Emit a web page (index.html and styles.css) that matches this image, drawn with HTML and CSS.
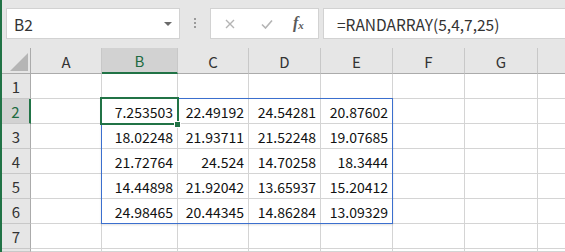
FILE: index.html
```html
<!DOCTYPE html>
<html>

<head>
    <meta charset="utf-8" />
    <title>Book1 - Excel</title>
    <link rel="stylesheet" href="styles.css">
</head>

<body>
    <div class="window">
        <div class="formula-bar">
            <div class="name-box">
                <span>B2</span>
                <svg class="drop" width="8" height="4" viewBox="0 0 8 4"><path d="M0 0h8L4 4z" fill="#6a6a6a"/></svg>
            </div>
            <div class="grip"><i></i><i></i><i></i></div>
            <div class="fx-box">
                <svg class="icon" width="10" height="10" viewBox="0 0 10 10"><path d="M1 1L9 9M9 1L1 9" stroke="#b4b4b4" stroke-width="1.4" fill="none"/></svg>
                <svg class="icon" width="12" height="10" viewBox="0 0 12 10"><path d="M1 5.5L4.5 9L11 1.5" stroke="#b4b4b4" stroke-width="1.6" fill="none"/></svg>
                <span class="fx">f<sub>x</sub></span>
            </div>
            <div class="formula-input">=RANDARRAY(5,4,7,25)</div>
        </div>

        <div class="sheet">
            <div class="hd corner"><svg width="18" height="18" viewBox="0 0 18 18"><path d="M18 0V18H0z" fill="#b5b5b5"/></svg></div>
            <div class="hd">A</div>
            <div class="hd sel-col">B</div>
            <div class="hd">C</div>
            <div class="hd">D</div>
            <div class="hd">E</div>
            <div class="hd">F</div>
            <div class="hd">G</div>
            <div class="hd last"></div>

            <div class="rh">1</div>
            <div class="c"></div><div class="c"></div><div class="c"></div><div class="c"></div><div class="c"></div><div class="c"></div><div class="c"></div><div class="c last"></div>

            <div class="rh sel-row">2</div>
            <div class="c"></div><div class="c">7.253503</div><div class="c">22.49192</div><div class="c">24.54281</div><div class="c">20.87602</div><div class="c"></div><div class="c"></div><div class="c last"></div>

            <div class="rh">3</div>
            <div class="c"></div><div class="c">18.02248</div><div class="c">21.93711</div><div class="c">21.52248</div><div class="c">19.07685</div><div class="c"></div><div class="c"></div><div class="c last"></div>

            <div class="rh">4</div>
            <div class="c"></div><div class="c">21.72764</div><div class="c">24.524</div><div class="c">14.70258</div><div class="c">18.3444</div><div class="c"></div><div class="c"></div><div class="c last"></div>

            <div class="rh">5</div>
            <div class="c"></div><div class="c">14.44898</div><div class="c">21.92042</div><div class="c">13.65937</div><div class="c">15.20412</div><div class="c"></div><div class="c"></div><div class="c last"></div>

            <div class="rh">6</div>
            <div class="c"></div><div class="c">24.98465</div><div class="c">20.44345</div><div class="c">14.86284</div><div class="c">13.09329</div><div class="c"></div><div class="c"></div><div class="c last"></div>

            <div class="rh">7</div>
            <div class="c"></div><div class="c"></div><div class="c"></div><div class="c"></div><div class="c"></div><div class="c"></div><div class="c"></div><div class="c last"></div>

            <!-- row 8 is only a sliver at the bottom edge -->
            <div class="rh"></div>
            <div class="c"></div><div class="c"></div><div class="c"></div><div class="c"></div><div class="c"></div><div class="c"></div><div class="c"></div><div class="c last"></div>

            <!-- spill range and active cell drawn over the grid -->
            <div class="spill"></div>
            <div class="active"><span class="handle"></span></div>
        </div>
    </div>
</body>

</html>
```

FILE: styles.css
```css
html,
body {
    margin: 0;
    padding: 0;
    overflow: hidden;
}

body {
    width: 565px;
    height: 252px;
    background: #e6e6e6;
    font-family: "Noto Sans CJK JP", "Liberation Sans", sans-serif;
    color: #222;
}

.window {
    height: 252px;
    border-left: 2px solid #217346;
}

/* formula bar */

.formula-bar {
    display: flex;
    align-items: flex-start;
    height: 48px;
    padding: 8px 0 0 4px;
    box-sizing: border-box;
}

.name-box {
    display: flex;
    align-items: center;
    justify-content: space-between;
    width: 174px;
    height: 31px;
    box-sizing: border-box;
    padding: 0 7px 0 7px;
    background: #fff;
    border: 1px solid #d2d2d2;
    font-size: 15.5px;
    color: #333;
}

.name-box .drop {
    margin-top: 1px;
}

.grip {
    display: flex;
    flex-direction: column;
    gap: 2px;
    width: 30px;
    padding-top: 10px;
    align-items: center;
}

.grip i {
    display: block;
    width: 2px;
    height: 2px;
    background: #9a9a9a;
}

.fx-box {
    display: flex;
    align-items: center;
    width: 109px;
    height: 31px;
    box-sizing: border-box;
    background: #fff;
    border: 1px solid #d2d2d2;
    padding-left: 14px;
    gap: 28px;
}

.fx-box .icon:nth-child(2) {
    margin-left: -2px;
}

.fx {
    font-family: "Liberation Serif", serif;
    font-style: italic;
    font-weight: bold;
    font-size: 16px;
    color: #5a5a5a;
    margin-left: -8px;
    margin-top: -2px;
}

.fx sub {
    font-size: 11px;
    vertical-align: -1px;
}

.formula-input {
    flex: 1;
    height: 31px;
    box-sizing: border-box;
    margin-left: 4px;
    padding-left: 13px;
    background: #fff;
    border: 1px solid #d2d2d2;
    border-right: none;
    display: flex;
    align-items: center;
    font-size: 15.5px;
    color: #333;
    white-space: nowrap;
}

/* sheet grid */

.sheet {
    position: relative;
    display: grid;
    grid-template-columns: 29px 71px 76px 71px 72px 72px 72px 73px 1fr;
    grid-template-rows: 26px repeat(7, 25px) 1fr;
    height: 204px;
    background: #fff;
}

.sheet > div {
    box-sizing: border-box;
}

.hd {
    display: flex;
    align-items: center;
    justify-content: center;
    background: #e6e6e6;
    border-right: 1px solid #c8c8c8;
    border-bottom: 1px solid #ababab;
    font-size: 15px;
    color: #333;
    padding-top: 1px;
}

.hd.corner {
    align-items: flex-end;
    justify-content: flex-end;
    padding: 0 2px 2px 0;
    border-right-color: #ababab;
}

.hd.sel-col {
    background: #d2d2d2;
    border-bottom: 2px solid #217346;
    color: #1e6b41;
}

.rh {
    display: flex;
    align-items: center;
    justify-content: center;
    background: #e6e6e6;
    border-right: 1px solid #ababab;
    border-bottom: 1px solid #c8c8c8;
    font-size: 15px;
    color: #333;
}

.rh.sel-row {
    background: #d2d2d2;
    border-right: 2px solid #217346;
    color: #1e6b41;
}

.c {
    display: flex;
    align-items: center;
    justify-content: flex-end;
    padding: 2px 4px 0 0;
    border-right: 1px solid #d4d4d4;
    border-bottom: 1px solid #d4d4d4;
    font-size: 14px;
    color: #111;
}

.last {
    border-right: none;
}

.spill {
    position: absolute;
    left: 99px;
    top: 50px;
    width: 292px;
    height: 126px;
    border: 1px solid #3b6fce;
    box-shadow: 0 1px 2px rgba(0, 0, 0, 0.12);
    pointer-events: none;
}

.active {
    position: absolute;
    left: 98px;
    top: 49px;
    width: 79px;
    height: 28px;
    box-sizing: border-box;
    border: 2px solid #217346;
}

.handle {
    position: absolute;
    right: -4px;
    bottom: -5px;
    width: 5px;
    height: 5px;
    background: #217346;
    border: 1px solid #fff;
}
```
